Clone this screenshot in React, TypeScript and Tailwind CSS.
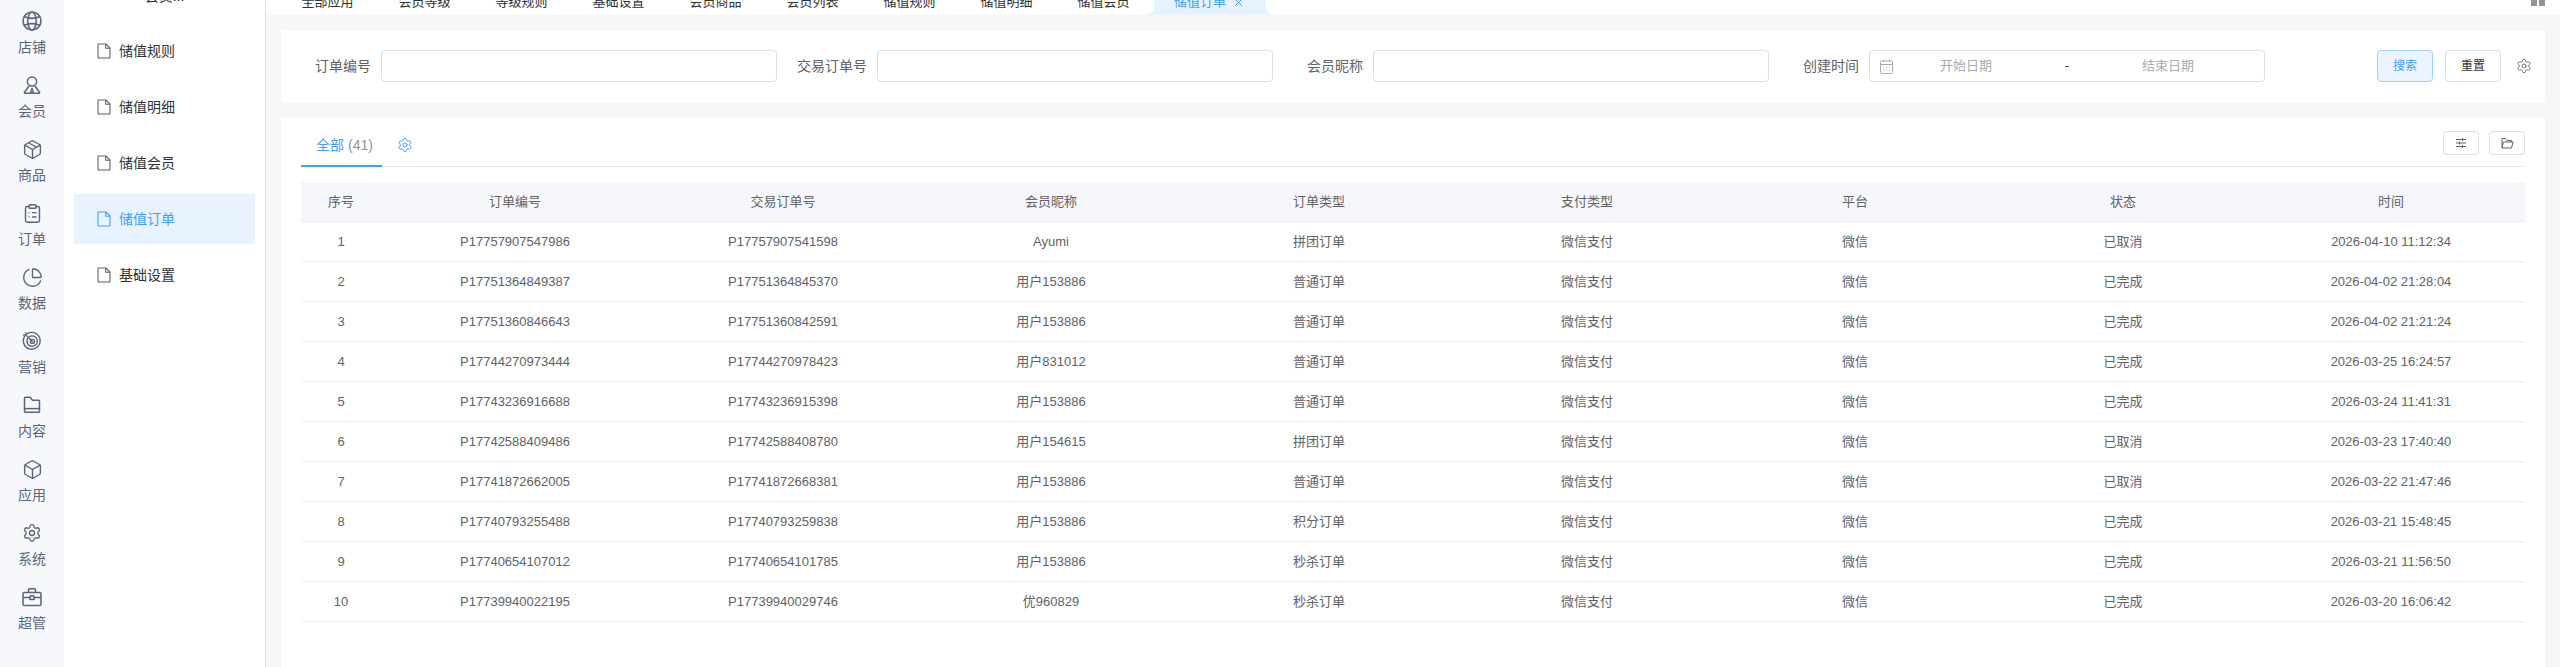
import { Box, ChartPie, ClipboardList, Package, Settings } from "lucide-react"

const font = { fontFamily: '"Liberation Sans", "Noto Sans CJK SC", sans-serif' }

const GlobeIcon = () => (
    <svg width="20" height="20" viewBox="0 0 20 20" fill="none" stroke="currentColor" strokeWidth="1.6">
        <circle cx="10" cy="10" r="9" />
        <ellipse cx="10" cy="10" rx="4.200" ry="9" />
        <path d="M2.300 5.800c4.800 1.900 10.600 1.900 15.400 0M2.300 14.200c4.800-1.900 10.600-1.900 15.400 0" />
    </svg>
)

const UserIcon = () => (
    <svg width="20" height="20" viewBox="0 0 20 20" fill="none" stroke="currentColor" strokeWidth="1.5" strokeLinejoin="round">
        <circle cx="10" cy="6.500" r="4.600" />
        <path d="M7 11L2.500 17.200c-.3.500 0 1.100.6 1.100h13.800c.6 0 .9-.6.6-1.100L13 11" />
        <path d="M8.600 18l1.400-4.600 1.400 4.600" />
    </svg>
)

const TargetIcon = () => (
    <svg width="20" height="20" viewBox="0 0 20 20" fill="none" stroke="currentColor" strokeWidth="1.4" strokeLinecap="round">
        <path d="M5.500 2.600a8.400 8.400 0 1 1-3 3" />
        <path d="M7.600 5.600a5.200 5.200 0 1 1-2 2" />
        <circle cx="10.400" cy="10.400" r="2" />
        <path d="M10.400 10.400L4 4M4 4V1.600M4 4H1.600" />
    </svg>
)

const FolderIcon = () => (
    <svg width="20" height="20" viewBox="0 0 20 20" fill="none" stroke="currentColor" strokeWidth="1.5" strokeLinejoin="round">
        <path d="M2.500 3.200c0-.5.4-.9.9-.9h4.700l2.400 3h6.100c.5 0 .9.4.9.9v10.200c0 .5-.4.9-.9.9H3.400c-.5 0-.9-.4-.9-.9z" />
        <path d="M3 13.600h14" />
    </svg>
)

const ToolboxIcon = () => (
    <svg width="20" height="20" viewBox="0 0 20 20" fill="none" stroke="currentColor" strokeWidth="1.5" strokeLinejoin="round">
        <rect x="1" y="5.500" width="18" height="13" rx="1.200" />
        <path d="M6.500 5.500V2.600c0-.5.4-.9.9-.9h5.200c.5 0 .9.4.9.9v2.900" />
        <path d="M1 10.500h18" />
        <rect x="8" y="9" width="4" height="3.400" fill="#f6f8fb" />
    </svg>
)

const DocIcon = () => (
    <svg width="14" height="16" viewBox="0 0 14 16" fill="none" stroke="currentColor" strokeWidth="1.1" strokeLinejoin="round">
        <path d="M1 1.500c0-.3.2-.5.5-.5h7.500L13 5v9.500c0 .3-.2.5-.5.5h-11c-.3 0-.5-.2-.5-.5z" />
        <path d="M8.700 1v4.200H13" />
    </svg>
)

const CalendarIcon = () => (
    <svg width="13" height="15" viewBox="0 0 13 15" fill="none" stroke="#a8abb2" strokeWidth="1">
        <rect x="0.500" y="2" width="12" height="12.500" rx="1" />
        <path d="M0.500 5.500h12M3.500 0.500v2M9.500 0.500v2M3 8h1M6 8h1M9 8h1M3 11h1M6 11h1M9 11h1" />
    </svg>
)

const SlidersIcon = () => (
    <svg width="12" height="12" viewBox="0 0 12 12" fill="none" stroke="#606266" strokeWidth="1">
        <path d="M1 2.500h10M1 6h10M1 9.500h10M7.500 1v3M4.500 4.500v3M7.500 8v3" />
    </svg>
)

const OpenFolderIcon = () => (
    <svg width="14" height="14" viewBox="0 0 14 14" fill="none" stroke="#606266" strokeWidth="1" strokeLinejoin="round">
        <path d="M2 12V2.500h3.500L7 4.500h4.500V6" />
        <path d="M2 12l1.500-6H13l-1.500 6z" />
    </svg>
)

const railItems = [
    { label: "店铺", icon: <GlobeIcon /> },
    { label: "会员", icon: <UserIcon /> },
    { label: "商品", icon: <Package size={21} strokeWidth={1.6} /> },
    { label: "订单", icon: <ClipboardList size={21} strokeWidth={1.6} /> },
    { label: "数据", icon: <ChartPie size={21} strokeWidth={1.6} /> },
    { label: "营销", icon: <TargetIcon /> },
    { label: "内容", icon: <FolderIcon /> },
    { label: "应用", icon: <Box size={21} strokeWidth={1.6} /> },
    { label: "系统", icon: <Settings size={20} strokeWidth={1.6} /> },
    { label: "超管", icon: <ToolboxIcon /> },
]

const menuItems = ["储值规则", "储值明细", "储值会员", "储值订单", "基础设置"]

const topTabs = ["全部应用", "会员等级", "等级规则", "基础设置", "会员商品", "会员列表", "储值规则", "储值明细", "储值会员"]

const columns = ["序号", "订单编号", "交易订单号", "会员昵称", "订单类型", "支付类型", "平台", "状态", "时间"]

const rows = [
    ["1", "P17757907547986", "P17757907541598", "Ayumi", "拼团订单", "微信支付", "微信", "已取消", "2026-04-10 11:12:34"],
    ["2", "P17751364849387", "P17751364845370", "用户153886", "普通订单", "微信支付", "微信", "已完成", "2026-04-02 21:28:04"],
    ["3", "P17751360846643", "P17751360842591", "用户153886", "普通订单", "微信支付", "微信", "已完成", "2026-04-02 21:21:24"],
    ["4", "P17744270973444", "P17744270978423", "用户831012", "普通订单", "微信支付", "微信", "已完成", "2026-03-25 16:24:57"],
    ["5", "P17743236916688", "P17743236915398", "用户153886", "普通订单", "微信支付", "微信", "已完成", "2026-03-24 11:41:31"],
    ["6", "P17742588409486", "P17742588408780", "用户154615", "拼团订单", "微信支付", "微信", "已取消", "2026-03-23 17:40:40"],
    ["7", "P17741872662005", "P17741872668381", "用户153886", "普通订单", "微信支付", "微信", "已取消", "2026-03-22 21:47:46"],
    ["8", "P17740793255488", "P17740793259838", "用户153886", "积分订单", "微信支付", "微信", "已完成", "2026-03-21 15:48:45"],
    ["9", "P17740654107012", "P17740654101785", "用户153886", "秒杀订单", "微信支付", "微信", "已完成", "2026-03-21 11:56:50"],
    ["10", "P17739940022195", "P17739940029746", "优960829", "秒杀订单", "微信支付", "微信", "已完成", "2026-03-20 16:06:42"],
]

function Field({ label }: { label: string }) {
    return (
        <div className="flex w-[496px] shrink-0 items-center pr-[10px]">
            <label className="w-[80px] text-right text-[14px] text-[#606266]">{label}</label>
            <div className="ml-[10px] h-[32px] w-[396px] rounded-[4px] border border-[#dcdfe6] bg-white" />
        </div>
    )
}

export default function App() {
    return (
        <div className="flex h-screen w-full overflow-hidden bg-white" style={font}>
            <div className="w-16 shrink-0 bg-[#f6f8fb]">
                {railItems.map((item) => (
                    <div key={item.label} className="flex h-16 flex-col items-center pt-[11px] text-[#5c6478]">
                        <div className="flex h-[20px] items-center justify-center">{item.icon}</div>
                        <span className="mt-[5px] text-[14px] leading-[22px]">{item.label}</span>
                    </div>
                ))}
            </div>

            <div className="w-[202px] shrink-0 border-r border-[#dcdfe6] px-[10px]">
                <div className="h-[26px] overflow-hidden text-center text-[14px] leading-[14px] text-[#303133]">
                    <div className="-mt-[11px]">会员...</div>
                </div>
                {menuItems.map((item) => {
                    const active = item === "储值订单"
                    return (
                        <div
                            key={item}
                            className={
                                active
                                    ? "mb-[6px] flex h-[50px] w-[181px] items-center gap-[8px] bg-[#e8f3ff] pl-[23px] text-[14px] text-[#409eff]"
                                    : "mb-[6px] flex h-[50px] w-[181px] items-center gap-[8px] pl-[23px] text-[14px] text-[#303133]"
                            }
                        >
                            <span className={active ? "text-[#409eff]" : "text-[#606266]"}>
                                <DocIcon />
                            </span>
                            {item}
                        </div>
                    )
                })}
            </div>

            <div className="flex min-w-0 flex-1 flex-col bg-[#f6f7f9]">
                <div className="flex h-[15px] shrink-0 overflow-hidden bg-white pl-[13px]">
                    {topTabs.map((tab) => (
                        <div key={tab} className="-mt-[7px] h-[22px] w-[97px] shrink-0 text-center text-[13px] leading-[18px] text-[#303133]">
                            {tab}
                        </div>
                    ))}
                    <div className="relative -ml-[6px] h-[15px] w-[128px] shrink-0">
                        <div className="absolute inset-x-[8px] bottom-0 -top-[8px] rounded-t-[8px] bg-[#e6f2ff]" />
                        <div className="absolute bottom-0 left-0 h-[8px] w-[8px] bg-[#e6f2ff]">
                            <div className="h-full w-full rounded-br-[8px] bg-white" />
                        </div>
                        <div className="absolute bottom-0 right-0 h-[8px] w-[8px] bg-[#e6f2ff]">
                            <div className="h-full w-full rounded-bl-[8px] bg-white" />
                        </div>
                        <div className="absolute -top-[7px] left-[28px] flex h-[18px] items-center gap-[8px] text-[13px] text-[#409eff]">
                            储值订单
                            <svg width="9" height="9" viewBox="0 0 9 9" stroke="currentColor" strokeWidth="1">
                                <path d="M1 1l7 7M8 1L1 8" />
                            </svg>
                        </div>
                    </div>
                    <div className="ml-auto mr-[15px] flex h-[6px] gap-[2px]">
                        <div className="h-[6px] w-[6px] bg-[#909399]" />
                        <div className="h-[6px] w-[6px] bg-[#909399]" />
                    </div>
                </div>

                <div className="flex flex-1 flex-col gap-[15px] px-[15px] pt-[15px]">
                    <div className="flex h-[72px] shrink-0 items-center bg-white pl-[10px]">
                        <Field label="订单编号" />
                        <Field label="交易订单号" />
                        <Field label="会员昵称" />
                        <div className="flex shrink-0 items-center">
                            <label className="w-[80px] text-right text-[14px] text-[#606266]">创建时间</label>
                            <div className="ml-[10px] flex h-[32px] w-[396px] items-center rounded-[4px] border border-[#dcdfe6] pl-[10px] text-[13px] text-[#a8abb2]">
                                <CalendarIcon />
                                <span className="w-[146px] text-center">开始日期</span>
                                <span className="w-[56px] text-center text-[#303133]">-</span>
                                <span className="w-[146px] text-center">结束日期</span>
                            </div>
                        </div>
                        <button className="ml-[112px] h-[32px] w-[56px] rounded-[4px] border border-[#a0cfff] bg-[#ecf5ff] text-[12px] text-[#409eff]">搜索</button>
                        <button className="ml-[12px] h-[32px] w-[56px] rounded-[4px] border border-[#dcdfe6] bg-white text-[12px] text-[#303133]">重置</button>
                        <Settings size={16} strokeWidth={1.3} className="ml-[15px] text-[#606266]" />
                    </div>

                    <div className="flex-1 bg-white px-[20px]">
                        <div className="flex h-[50px] items-end justify-between border-b border-[#e4e7ed]">
                            <div className="flex items-center">
                                <div className="-mb-px flex h-[50px] w-[81px] items-center gap-[4px] border-b-2 border-[#409eff] pl-[15px] pt-[8px] text-[14px] text-[#409eff]">
                                    全部 <span className="text-[#909399]">(41)</span>
                                </div>
                                <Settings size={16} strokeWidth={1.4} className="ml-[15px] mt-[7px] text-[#409eff]" />
                            </div>
                            <div className="mb-[11px] flex gap-[10px]">
                                <button className="flex h-[24px] w-[36px] items-center justify-center rounded-[4px] border border-[#dcdfe6]">
                                    <SlidersIcon />
                                </button>
                                <button className="flex h-[24px] w-[36px] items-center justify-center rounded-[4px] border border-[#dcdfe6]">
                                    <OpenFolderIcon />
                                </button>
                            </div>
                        </div>

                        <table className="mt-[15px] w-full table-fixed border-separate border-spacing-0 text-center text-[13px] text-[#606266]">
                            <colgroup>
                                <col className="w-[80px]" />
                            </colgroup>
                            <thead>
                                <tr>
                                    {columns.map((col) => (
                                        <th key={col} className="h-[40px] border-b border-[#ebeef5] bg-[#f5f7fa] font-normal">
                                            {col}
                                        </th>
                                    ))}
                                </tr>
                            </thead>
                            <tbody>
                                {rows.map((row) => (
                                    <tr key={row[0]}>
                                        {row.map((cell, i) => (
                                            <td key={i} className="h-[40px] border-b border-[#ebeef5]">
                                                {cell}
                                            </td>
                                        ))}
                                    </tr>
                                ))}
                            </tbody>
                        </table>
                    </div>
                </div>
            </div>
        </div>
    )
}
